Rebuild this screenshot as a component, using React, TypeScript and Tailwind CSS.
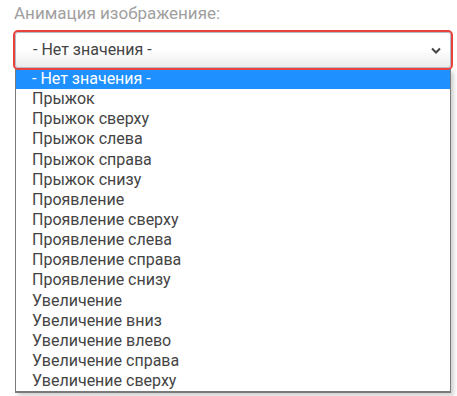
const options = [
  '- Нет значения -',
  'Прыжок',
  'Прыжок сверху',
  'Прыжок слева',
  'Прыжок справа',
  'Прыжок снизу',
  'Проявление',
  'Проявление сверху',
  'Проявление слева',
  'Проявление справа',
  'Проявление снизу',
  'Увеличение',
  'Увеличение вниз',
  'Увеличение влево',
  'Увеличение справа',
  'Увеличение сверху',
];

const App = () => {
  return (
    <div className="w-[457px] h-[396px] bg-white overflow-hidden font-['Roboto',sans-serif] text-[16px]">
      <div className="pl-[15px] pr-[6px] pt-[1px]">
        {/* Label */}
        <p className="text-[17px] text-[#a0a0a0] leading-[24px] -ml-[1px]">Анимация изображенияе:</p>

        {/* Select box */}
        <div className="mt-[7px] h-[36px] flex items-center justify-between pl-[17px] pr-[9px] rounded-[3px] border border-[#b3bcc7] outline-2 outline-[#e8413c] bg-gradient-to-b from-white via-white to-[#ebebeb] text-[#444]">
          <span className="leading-[20px]">- Нет значения -</span>
          <svg width="10" height="7" viewBox="0 0 10 7" className="mt-[1px]">
            <polyline points="1,1.5 5,5.5 9,1.5" fill="none" stroke="#444" strokeWidth="2" />
          </svg>
        </div>

        {/* Open list */}
        <div className="mt-[1px] border border-t-0 border-[#7a7a7a] border-b-2 bg-white shadow-[3px_3px_4px_rgba(0,0,0,0.18)]">
          {options.map((o, i) => (
            <div
              key={o}
              className={
                i === 0
                  ? 'h-[20.15px] leading-[20px] pl-[16px] bg-[#1e90ff] text-white'
                  : 'h-[20.15px] leading-[20px] pl-[16px] text-[#444]'
              }
            >
              {o}
            </div>
          ))}
        </div>
      </div>
    </div>
  );
};

export default App;
